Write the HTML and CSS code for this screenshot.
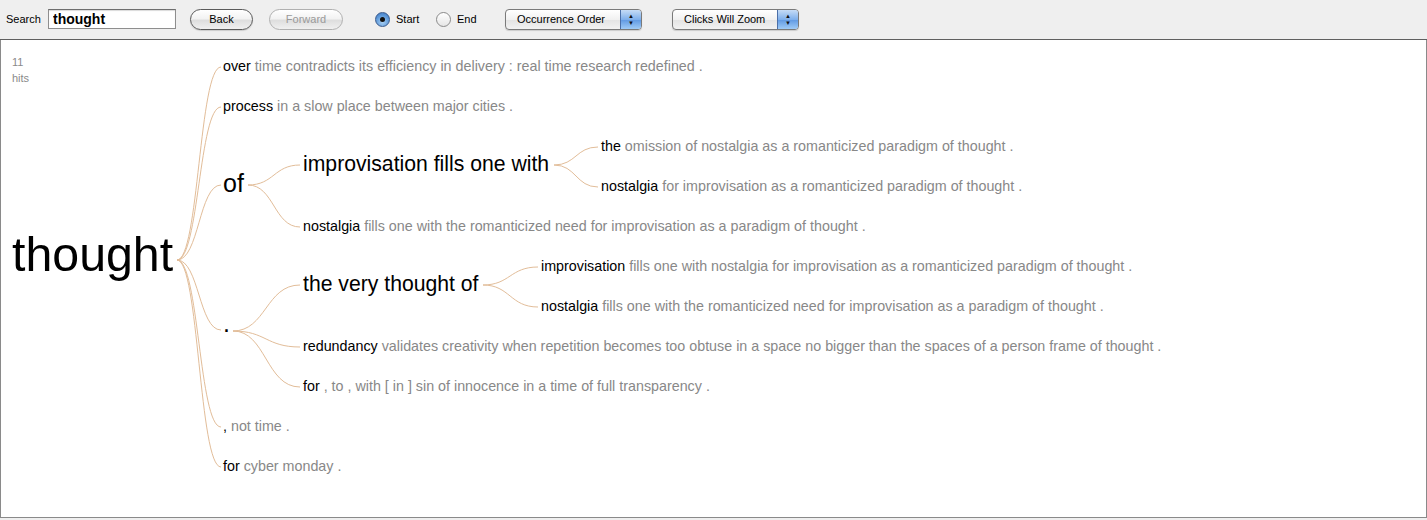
FILE: index.html
```html
<!DOCTYPE html>
<html lang="en">
<head>
  <meta charset="UTF-8" />
  <title>Word Tree</title>
  <link rel="stylesheet" href="styles.css">
</head>
<body>
  <div class="toolbar">
    <label class="search-label" for="search">Search</label>
    <input id="search" class="search-input" type="text" value="thought" />
    <button class="pill back">Back</button>
    <button class="pill forward" disabled>Forward</button>
    <span class="radio checked"></span><span class="radio-label label-start">Start</span>
    <span class="radio"></span><span class="radio-label label-end">End</span>
    <div class="select order"><span class="select-text">Occurrence Order</span><span class="select-arrows">▲<br>▼</span></div>
    <div class="select zoom"><span class="select-text">Clicks Will Zoom</span><span class="select-arrows">▲<br>▼</span></div>
  </div>

  <div class="panel">
    <svg class="tree" viewBox="1 40 1425 477" width="1425" height="477">
      <!-- счётчик -->
      <text class="hits" x="12" y="66">11</text>
      <text class="hits" x="12" y="82">hits</text>

      <!-- связи -->
      <g class="edges">
        <path d="M177 260 C199 260 199 67 221 67" />
        <path d="M177 260 C199 260 199 107 221 107" />
        <path d="M177 260 C199 260 199 185 221 185" />
        <path d="M177 260 C199 260 199 330 221 330" />
        <path d="M177 260 C199 260 199 427 221 427" />
        <path d="M177 260 C199 260 199 467 221 467" />

        <path d="M248 185 C274 185 274 165 300 165" />
        <path d="M248 185 C274 185 274 227 300 227" />

        <path d="M554 165 C576 165 576 147 598 147" />
        <path d="M554 165 C576 165 576 187 598 187" />

        <path d="M233 331 C266 331 266 285 300 285" />
        <path d="M233 331 C266 331 266 347 300 347" />
        <path d="M233 331 C266 331 266 387 300 387" />

        <path d="M483 285 C510 285 510 267 538 267" />
        <path d="M483 285 C510 285 510 307 538 307" />
      </g>

      <!-- слова -->
      <text class="word t48" x="12" y="271">thought</text>

      <text class="t14" x="223" y="71"><tspan class="key">over</tspan><tspan class="rest"> time contradicts its efficiency in delivery : real time research redefined .</tspan></text>
      <text class="t14" x="223" y="111"><tspan class="key">process</tspan><tspan class="rest"> in a slow place between major cities .</tspan></text>
      <text class="word t25" x="223" y="192">of</text>
      <text class="word t25" x="223" y="332">.</text>
      <text class="t14" x="223" y="431"><tspan class="key">,</tspan><tspan class="rest"> not time .</tspan></text>
      <text class="t14" x="223" y="471"><tspan class="key">for</tspan><tspan class="rest"> cyber monday .</tspan></text>

      <text class="word t21" x="303" y="171">improvisation fills one with</text>
      <text class="t14" x="303" y="231"><tspan class="key">nostalgia</tspan><tspan class="rest"> fills one with the romanticized need for improvisation as a paradigm of thought .</tspan></text>
      <text class="word t21" x="303" y="291">the very thought of</text>
      <text class="t14" x="303" y="351"><tspan class="key">redundancy</tspan><tspan class="rest"> validates creativity when repetition becomes too obtuse in a space no bigger than the spaces of a person frame of thought .</tspan></text>
      <text class="t14" x="303" y="391"><tspan class="key">for</tspan><tspan class="rest"> , to , with [ in ] sin of innocence in a time of full transparency .</tspan></text>

      <text class="t14" x="601" y="151"><tspan class="key">the</tspan><tspan class="rest"> omission of nostalgia as a romanticized paradigm of thought .</tspan></text>
      <text class="t14" x="601" y="191"><tspan class="key">nostalgia</tspan><tspan class="rest"> for improvisation as a romanticized paradigm of thought .</tspan></text>

      <text class="t14" x="541" y="271"><tspan class="key">improvisation</tspan><tspan class="rest"> fills one with nostalgia for improvisation as a romanticized paradigm of thought .</tspan></text>
      <text class="t14" x="541" y="311"><tspan class="key">nostalgia</tspan><tspan class="rest"> fills one with the romanticized need for improvisation as a paradigm of thought .</tspan></text>
    </svg>
  </div>
</body>
</html>
```

FILE: styles.css
```css
* {
  margin: 0;
  padding: 0;
  box-sizing: border-box;
}

body {
  width: 1427px;
  height: 520px;
  background: #efefef;
  font-family: "Liberation Sans", Arial, sans-serif;
  overflow: hidden;
}

.toolbar {
  height: 40px;
  display: flex;
  align-items: center;
  border-bottom: 1px solid #5f5f5f;
  padding-bottom: 1px;
  font-size: 11px;
  color: #000;
}

.toolbar > * {
  flex-shrink: 0;
}

.search-label {
  margin-left: 6px;
  width: 42px;
}

.search-input {
  width: 128px;
  height: 20px;
  border: 1px solid #8e8e8e;
  border-top-color: #6e6e6e;
  box-shadow: inset 0 1px 1px rgba(0, 0, 0, 0.15);
  background: #fff;
  font-family: "Liberation Sans", Arial, sans-serif;
  font-weight: bold;
  font-size: 14px;
  padding: 0 4px;
  color: #000;
  outline: none;
}

.pill {
  height: 21px;
  border-radius: 11px;
  border: 1px solid #5a5a5a;
  background: linear-gradient(#ffffff, #f3f3f3 45%, #dedede 55%, #f0f0f0);
  font-family: "Liberation Sans", Arial, sans-serif;
  font-size: 11px;
  color: #000;
  box-shadow: 0 1px 1px rgba(0, 0, 0, 0.15);
}

.back {
  width: 63px;
  margin-left: 14px;
}

.forward {
  width: 74px;
  margin-left: 16px;
  border-color: #b0b0b0;
  color: #9a9a9a;
  box-shadow: none;
}

.radio {
  width: 15px;
  height: 15px;
  border-radius: 50%;
  border: 1px solid #8a8a8a;
  background: linear-gradient(#ffffff, #e6e6e6);
  position: relative;
}

.radio.checked {
  margin-left: 32px;
  border-color: #3a5a8c;
  background: radial-gradient(circle at 50% 70%, #a8d0f4, #5b97d8 60%, #3c74be);
}

.radio.checked::after {
  content: "";
  position: absolute;
  left: 4px;
  top: 4px;
  width: 5px;
  height: 5px;
  border-radius: 50%;
  background: #111;
}

.radio-label {
  margin-left: 6px;
}

.label-start {
  width: 40px;
}

.label-end {
  width: 48px;
}

.select {
  height: 21px;
  display: flex;
  border: 1px solid #7a7a7a;
  border-radius: 4px;
  background: linear-gradient(#ffffff, #f1f1f1 50%, #e3e3e3 51%, #f2f2f2);
  box-shadow: 0 1px 1px rgba(0, 0, 0, 0.15);
  overflow: hidden;
}

.select-text {
  flex: 1;
  padding-left: 11px;
  line-height: 18px;
  font-size: 11px;
}

.select-arrows {
  width: 21px;
  background: linear-gradient(#c6dcf6, #7fb0ec 50%, #5f98e2 51%, #9fcbf7);
  border-left: 1px solid #4b6fa8;
  font-size: 6px;
  line-height: 7px;
  text-align: center;
  padding-top: 3px;
  color: #111;
}

.order {
  width: 137px;
}

.zoom {
  width: 127px;
  margin-left: 30px;
}

.panel {
  height: 478px;
  background: #fff;
  border-left: 1px solid #8a8a8a;
  border-right: 1px solid #8a8a8a;
  border-bottom: 1px solid #8a8a8a;
}

.tree {
  display: block;
  font-family: "Liberation Sans", Arial, sans-serif;
}

.hits {
  font-size: 11px;
  fill: #8a8a8a;
}

.edges path {
  fill: none;
  stroke: #e2bd99;
  stroke-width: 1;
}

.word,
.key {
  fill: #000;
}

.rest {
  fill: #888;
}

.t14 {
  font-size: 14.3px;
}

.t21 {
  font-size: 21.2px;
}

.t25 {
  font-size: 25px;
}

.t48 {
  font-size: 48.3px;
}
```
